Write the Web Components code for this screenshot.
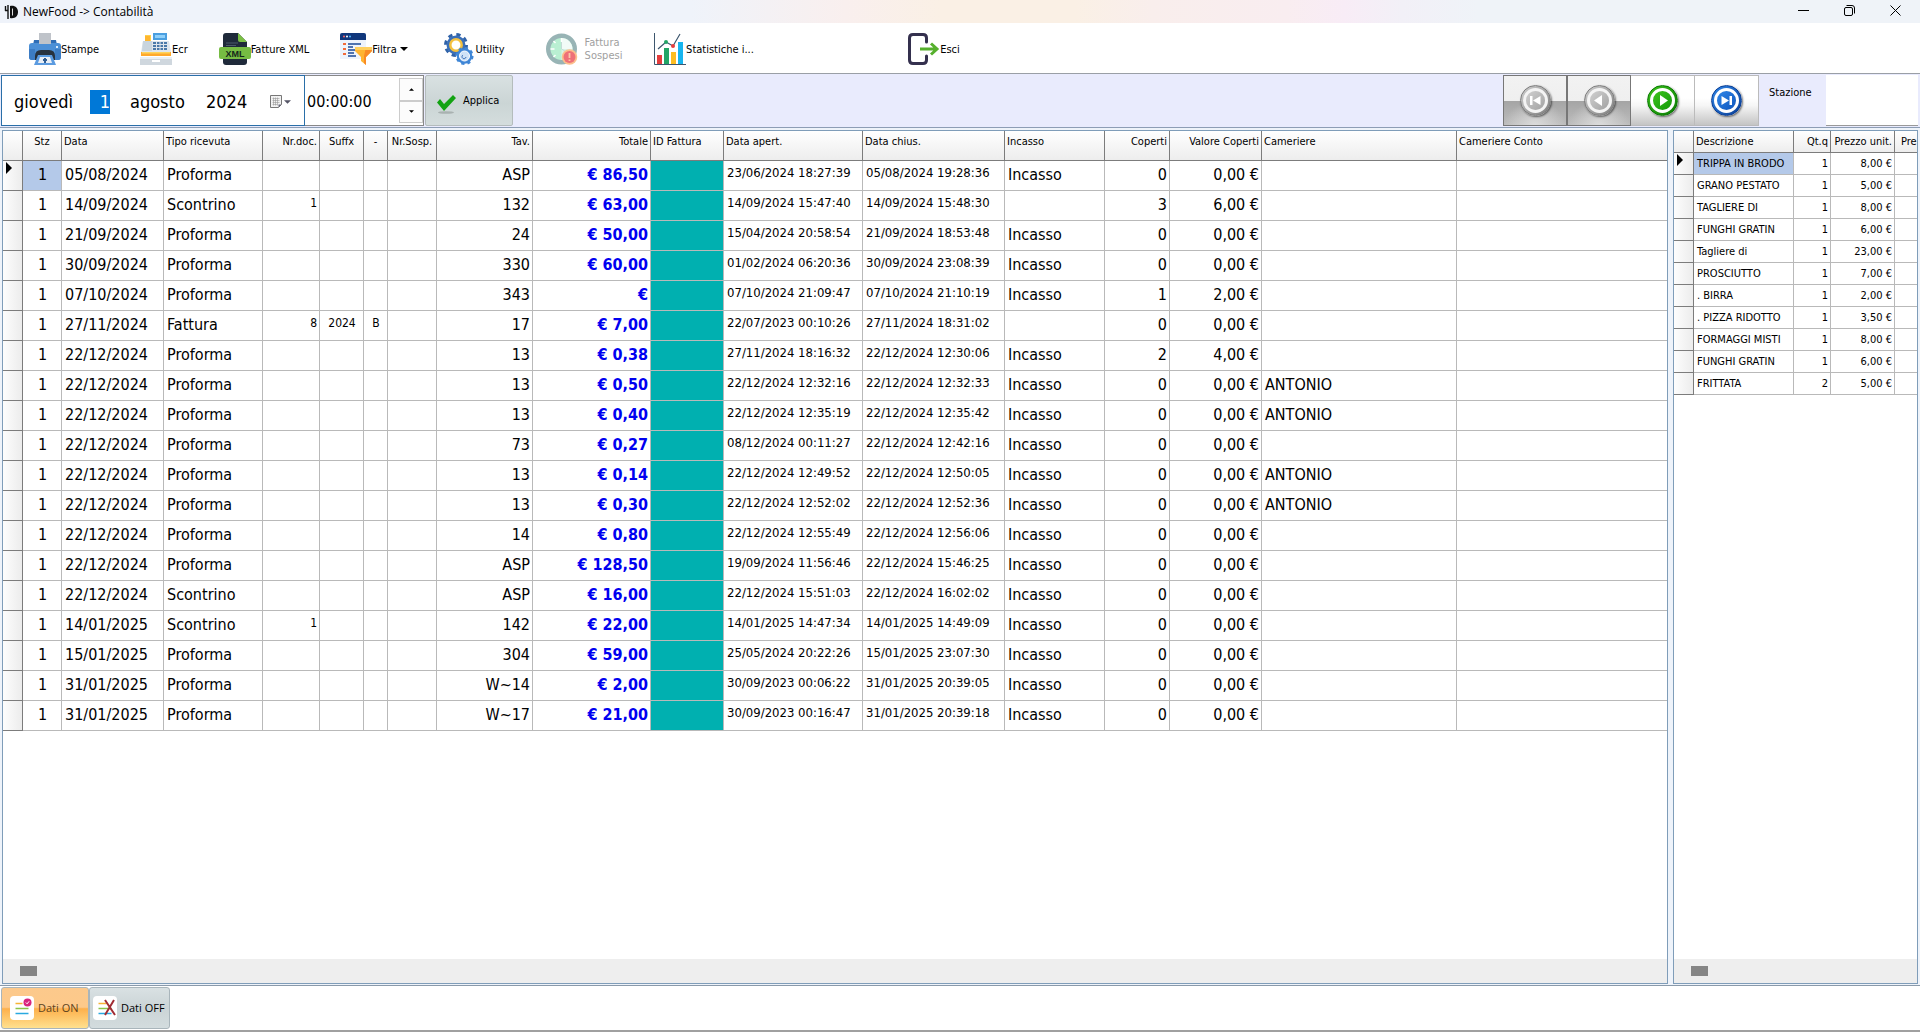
<!DOCTYPE html>
<html lang="it">
<head>
<meta charset="utf-8">
<title>NewFood -> Contabilità</title>
<style>
html, body { height: 100%; margin: 0; }
body { font: 11px/14px "DejaVu Sans Condensed", "Noto Sans", sans-serif; color: #000; background: #fff; overflow: hidden; }
</style>
</head>
<body>
<nf-app></nf-app>

<template id="t-icons">
  <svg data-name="logo" viewBox="0 0 14 14"><path d="M1.500 1v5M4 0v14M1 5.500h3" stroke="#111" stroke-width="1.400" fill="none"/><path d="M6 1c5-1 8 2 8 6s-3 7-8 6z" fill="#111"/><path d="M8.500 3.500v7" stroke="#ddd"/></svg>
  <svg data-name="print" viewBox="0 0 32 32"><path d="M5 7h22l1 5H4z" fill="#2f6db5"/><rect y="10" width="32" height="17" rx="3" fill="#4b8fd6"/><path d="M0 16h6v11H3q-3 0-3-3zM26 16h6v8q0 3-3 3h-3z" fill="#3c7cc4"/><path d="M10 0h12v11H10z" fill="#bfc3c9"/><path d="M6 27v-4q0-6 6-6h8q6 0 6 6v4z" fill="#27323f"/><path d="M9 22h14l4 10H5z" fill="#5b9be0"/><path d="M11 24h10l2 6H9z" fill="#e9eef5"/><path d="M16 25v5M14 27h4" stroke="#2f5d93" stroke-width="2"/><path d="M27 13h2v2h-2z" fill="#d9ecff"/></svg>
  <svg data-name="ecr" viewBox="0 0 32 32"><path d="M5 2h6v9H5z" fill="#ffd04a"/><path d="M13 0h14v7H13z" fill="#4a9fe0"/><path d="M15 2h10v3H15z" fill="#8fd0fa"/><path d="M3 8h26l2 11H1z" fill="#dfe6ec"/><path d="M3 8h9v10H2z" fill="#c9d5de"/><path d="M5 3h5v5H5z" fill="#ffb62e"/><path d="M13 9h14v8H13z" fill="#4b79a8"/><path d="M13 11.500h14M13 14.500h14M16.500 9v8M20 9v8M23.500 9v8" stroke="#dfe6ec"/><path d="M1 19h30v4H1z" fill="#ffa92c"/><path d="M2 19h28v1.500H2z" fill="#ffd45c"/><path d="M0 24h32v8H0z" fill="#cfd7de"/><path d="M0 24h32v2H0z" fill="#eaf0f4"/><path d="M12 28h8" stroke="#fff" stroke-width="2"/></svg>
  <svg data-name="xml" viewBox="0 0 32 32"><path d="M7 0h12l9 9v20q0 3-3 3H7q-3 0-3-3V3q0-3 3-3z" fill="#1f2a3a"/><path d="M19 0l9 9h-7q-2 0-2-2z" fill="#7ac043"/><path d="M7 10h12M7 12.500h10" stroke="#4d5a6b"/><rect y="14" width="32" height="12" rx="2" fill="#76bc43"/><text x="16" y="23.500" text-anchor="middle" font-family="Liberation Sans Narrow, Liberation Sans" font-weight="bold" font-size="9" fill="#14261a">XML</text></svg>
  <svg data-name="filter" viewBox="0 0 32 32"><path d="M2 0h22q2 0 2 2v24H0V2q0-2 2-2z" fill="#eef3fc"/><path d="M2 0h22q2 0 2 2v5H0V2q0-2 2-2z" fill="#10377c"/><circle cx="4" cy="3.500" r="1" fill="#f66"/><circle cx="7" cy="3.500" r="1" fill="#fff"/><circle cx="10" cy="3.500" r="1" fill="#5bf"/><path d="M3 11h3M3 16h3M3 21h3" stroke="#f26b3a" stroke-width="2"/><path d="M8 11h13M8 14h5M8 17h8M8 20h6M8 23h8" stroke="#1b4a96" stroke-width="1.400"/><path d="M15 14h17v4l-6 6v8l-5-4v-4l-6-6z" fill="#ffb431"/><path d="M26 14h6v4l-6 6v8l-2-2v-7z" fill="#f98a25"/><path d="M15 14h17v3H15z" fill="#ffcf5e"/></svg>
  <svg data-name="gears" viewBox="0 0 32 32"><circle cx="13" cy="12" r="10.500" fill="none" stroke="#2f62a8" stroke-width="3" stroke-dasharray="4.250 4"/><circle cx="13" cy="12" r="7.500" fill="#fff" stroke="#3a6fb8" stroke-width="4"/><circle cx="13" cy="12" r="5.700" fill="#fff" stroke="#f4c13f" stroke-width="2.500"/><circle cx="21.500" cy="23" r="7.800" fill="#3f86d6" stroke="#3f86d6" stroke-width="2.500" stroke-dasharray="3.100 3.030"/><circle cx="21.500" cy="23" r="5" fill="#cfe2f7" stroke="#fff"/><path d="M20 22a2 2 0 1 0 3 2" stroke="#3a6fb8" fill="none"/></svg>
  <svg data-name="clock" viewBox="0 0 32 32"><circle cx="15.500" cy="16" r="13.250" fill="#b9efd2" stroke="#98b4b5" stroke-width="4.500"/><path d="M15.500 16V5a11 11 0 0 1 11 11z" fill="#f2fbf7"/><path d="M15.500 16h11a11 11 0 0 1-11 11z" fill="#d8f3e6"/><path d="M15.500 5v4M4.500 16h4M7.500 8l2 2M7.500 24l2-2" stroke="#fff" stroke-width="1.500"/><path d="M15.500 9v7l5 3" fill="none" stroke="#c4dcd6"/><circle cx="23.500" cy="24" r="7.750" fill="#fbbf8c"/><circle cx="23.500" cy="24" r="6" fill="#ee7078"/><path d="M23.500 20v5M23.500 26.500v1.500" stroke="#fcc6a8" stroke-width="1.800"/></svg>
  <svg data-name="chart" viewBox="0 0 32 32"><path d="M.5 0v31.500H32" fill="none" stroke="#3d566e"/><path d="M3 22h5v9H3z" fill="#e43d3d"/><path d="M10 15h5v16h-5z" fill="#23a566"/><path d="M17 19h5v12h-5z" fill="#fdbd22"/><path d="M24 9h5v22h-5z" fill="#17b5ef"/><path d="M4 16l8-7 7 4 7-12" fill="none" stroke="#3d566e" stroke-width="1.200"/><circle cx="12" cy="9" r="2" fill="#23a566"/><circle cx="19" cy="13" r="2" fill="#e43d3d"/></svg>
  <svg data-name="exit" viewBox="0 0 32 32"><path d="M18.500 9V5q0-3.500-3.500-3.500H5Q1.500 1.500 1.500 5v22q0 3.500 3.500 3.500h10q3.500 0 3.500-3.500v-4" fill="none" stroke="#34304e" stroke-width="3" stroke-linecap="round"/><path d="M12 16h16M23 10.500l6 5.500-6 5.500" fill="none" stroke="#56b02d" stroke-width="3"/></svg>
  <svg data-name="check" viewBox="0 0 20 20"><ellipse cx="10" cy="18.500" rx="8" ry="1.300" fill="#a9b2b1"/><path d="M1 8.500L4 5l4 5 9-9 3 3L8 17z" fill="#12a312"/></svg>
  <svg data-name="cal" viewBox="0 0 12 13"><path d="M.5.5h11v9l-3 3h-8z" fill="#f2f2f2" stroke="#777"/><path d="M2.500 3.500h7M2.500 5.500h7M2.500 7.500h7M2.500 9.500h5M3.500 2.500v8M5.500 2.500v8M7.500 2.500v8" stroke="#999" stroke-width=".6"/><path d="M8.500 12.500v-3h3z" fill="#667"/></svg>
  <svg data-name="down" viewBox="0 0 8 4"><path d="M0 0h8L4 4z" fill="currentColor"/></svg>
  <svg data-name="up" viewBox="0 0 8 4"><path d="M0 4h8L4 0z" fill="currentColor"/></svg>
  <svg data-name="min" viewBox="0 0 11 11"><path d="M0 5.500h11" stroke="#000"/></svg>
  <svg data-name="restore" viewBox="0 0 11 11"><rect x=".5" y="2.500" width="8" height="8" rx="1.500" fill="none" stroke="#000"/><path d="M2.500.5H8Q10.500.5 10.500 3v5.500" fill="none" stroke="#000"/></svg>
  <svg data-name="close" viewBox="0 0 11 11"><path d="M.5.5l10 10M10.500.5l-10 10" stroke="#000"/></svg>
  <svg data-name="on" viewBox="0 0 24 24"><rect width="24" height="24" rx="4" fill="#fff"/><path d="M5.500 7.500h7" stroke="#f7b334" stroke-width="1.500"/><path d="M5.500 12.500h13" stroke="#8bc34a" stroke-width="1.500"/><path d="M5.500 17.500h13" stroke="#29a9e0" stroke-width="1.500"/><circle cx="17.500" cy="6.500" r="4" fill="#d9267e"/><path d="M15.800 6.500l1.300 1.300 2-2.500" fill="none" stroke="#fff"/></svg>
  <svg data-name="off" viewBox="0 0 24 24"><rect width="24" height="24" rx="4" fill="#fff"/><path d="M5.500 7.500h8" stroke="#f7b334" stroke-width="1.500"/><path d="M5.500 12.500h13" stroke="#8bc34a" stroke-width="1.500"/><path d="M5.500 17.500h13" stroke="#29a9e0" stroke-width="1.500"/><path d="M12 4l10 15M21 4L12 19" stroke="#a02c33" stroke-width="2"/></svg>
  <svg data-name="first" viewBox="0 0 19 19"><path d="M4 5h2.500v9H4zM14.500 5v9l-7.500-4.500z" fill="#fff"/></svg>
  <svg data-name="prev" viewBox="0 0 19 19"><path d="M12 4v11L4 9.500z" fill="#fff"/></svg>
  <svg data-name="next" viewBox="0 0 19 19"><path d="M7 4v11l8-5.500z" fill="#fff"/></svg>
  <svg data-name="last" viewBox="0 0 19 19"><path d="M4.500 5v9l7.500-4.500zM12.500 5H15v9h-2.500z" fill="#fff"/></svg>
</template>

<template id="t-app">
  <style>
    :host { display: flex; flex-direction: column; height: 100vh; box-sizing: border-box; border-bottom: 2px solid #a0a0a0; }
    main { flex: 1; display: flex; gap: 5px; padding: 2px 2px 1px; min-height: 0; background: #eef3fa; border-top: 1px solid #8d9db5; border-bottom: 1px solid #8a9aaa; }
    nf-grid { min-width: 0; }
    .docs { flex: 1; --head: 30px; --row: 30px; }
    .items { flex: 0 0 245px; --head: 22px; --row: 22px; --thumb: 17px; }
  </style>
  <nf-titlebar>NewFood -&gt; Contabilità</nf-titlebar>
  <nf-toolbar></nf-toolbar>
  <nf-filterbar></nf-filterbar>
  <main>
    <nf-grid class="docs" data-source="docs"></nf-grid>
    <nf-grid class="items" data-source="items"></nf-grid>
  </main>
  <nf-footer></nf-footer>
</template>

<template id="t-titlebar">
  <style>
    :host { display: flex; align-items: center; gap: 5px; height: 23px; padding-left: 4px; font: 12px/20px "Open Sans", "Noto Sans", sans-serif; background: linear-gradient(90deg, #eff3fa 0, #eff3fa 36%, #f9efee 44%, #faf0e5 49%, #faf0e5 56%, #f9eeec 60%, #f9edf0 67%, #f8ecf6 70%, #f2f0f7 73%, #eff3f8 77%); }
    .logo { width: 14px; height: 14px; }
    h1 { flex: 1; margin: 0; font: inherit; }
    button { display: grid; place-items: center; width: 46px; height: 20px; padding: 0; border: 0; background: none; }
    button nf-icon { width: 11px; height: 11px; }
    .win { display: flex; padding-right: 2px; padding-bottom: 2px; }
  </style>
  <nf-icon class="logo" name="logo"></nf-icon>
  <h1><slot></slot></h1>
  <div class="win">
    <button aria-label="Riduci"><nf-icon name="min"></nf-icon></button>
    <button aria-label="Ripristina"><nf-icon name="restore"></nf-icon></button>
    <button aria-label="Chiudi"><nf-icon name="close"></nf-icon></button>
  </div>
</template>

<template id="t-toolbar">
  <style>
    :host { display: flex; box-sizing: border-box; height: 51px; padding: 2px 0 0 14px; border-bottom: 1px solid #9a9fa6; background: #fff; }
    .exit { margin-left: 130px; }
    .w80 { flex-basis: 80px; }
    .w120 { flex-basis: 120px; }
    .w140 { flex-basis: 140px; }
    nf-tool[disabled] { color: #a0a0a0; --gap: 7px; }
  </style>
  <nf-tool icon="print">Stampe</nf-tool>
  <nf-tool icon="ecr">Ecr</nf-tool>
  <nf-tool icon="xml">Fatture XML</nf-tool>
  <nf-tool icon="filter" class="w120" menu>Filtra</nf-tool>
  <nf-tool icon="gears" class="w80">Utility</nf-tool>
  <nf-tool icon="clock" class="w140" disabled>Fattura<br>Sospesi</nf-tool>
  <nf-tool icon="chart">Statistiche i...</nf-tool>
  <nf-tool icon="exit" class="exit">Esci</nf-tool>
</template>

<template id="t-tool">
  <style>
    :host { display: flex; flex: 0 0 100px; }
    button { flex: 1; display: flex; align-items: center; justify-content: center; gap: var(--gap, 0); padding: 0; border: 0; background: none; font: inherit; line-height: 13px; text-align: left; color: inherit; white-space: nowrap; }
    nf-icon { flex: none; width: 32px; height: 32px; }
    .arrow { width: 8px; height: 4px; margin-left: 3px; }
  </style>
  <button><nf-icon></nf-icon><span><slot></slot></span></button>
</template>

<template id="t-filterbar">
  <style>
    :host { display: flex; height: 51px; padding: 1px 2px 1px 1px; background: #e9ebfd; }
    input { box-sizing: border-box; border: 0; padding: 0; margin: 0; background: #fff; font: 18px/24px "DejaVu Sans Condensed", "Noto Sans", sans-serif; color: #000; }
    .date { display: flex; align-items: center; width: 304px; box-sizing: border-box; padding: 2px 12px 0; border: 1px solid #2a6fa8; background: #fff; }
    .date input { height: 24px; }
    .wd { width: 76px; }
    .dd { width: 20px; color: #fff; background: #0078d7; text-align: right; }
    .mm { width: 76px; margin-left: 20px; }
    .yy { width: 64px; }
    .pick { display: flex; align-items: center; gap: 2px; padding: 0; border: 0; background: none; color: #556; }
    .cal { width: 12px; height: 13px; }
    .dn { width: 7px; height: 4px; }
    .time { display: flex; width: 119px; box-sizing: border-box; background: #fff; border: solid #888; border-width: 1px 1px 1px 0; }
    .time input { flex: 1; min-width: 0; font-size: 16px; padding: 2px 0 0 2px; }
    .spin { display: flex; flex-direction: column; width: 24px; padding: 2px 0; }
    .spin button { flex: 1; display: grid; place-items: center; padding: 0; border: 1px solid #ccc; background: #fcfcfc; }
    .spin nf-icon { width: 5px; height: 3px; }
    .apply { display: flex; align-items: center; width: 88px; margin-left: 1px; padding: 0 10px; gap: 7px; border: 1px solid #b4bcbc; border-radius: 2px; background: linear-gradient(#d9e1e2, #cbd5d5 55%, #d4dddd); font: inherit; }
    .apply nf-icon { width: 20px; height: 20px; margin-top: 6px; }
    .nav { display: flex; margin-left: auto; }
    .st { display: flex; flex: none; }
    .st label { width: 67px; box-sizing: border-box; padding: 11px 10px; }
    .st input { width: 92px; border-bottom: 1px solid #999; }
  </style>
  <div class="date" role="group" aria-label="Data">
    <input class="wd" aria-label="Giorno della settimana" value="giovedì">
    <input class="dd" aria-label="Giorno" value="1">
    <input class="mm" aria-label="Mese" value="agosto">
    <input class="yy" aria-label="Anno" value="2024">
    <button class="pick" aria-label="Apri calendario"><nf-icon class="cal" name="cal"></nf-icon><nf-icon class="dn" name="down"></nf-icon></button>
  </div>
  <div class="time">
    <input aria-label="Ora" value="00:00:00">
    <div class="spin"><button aria-label="Aumenta"><nf-icon name="up"></nf-icon></button><button aria-label="Diminuisci"><nf-icon name="down"></nf-icon></button></div>
  </div>
  <button class="apply"><nf-icon name="check"></nf-icon>Applica</button>
  <div class="nav">
    <nf-nav icon="first" label="Primo" tone="grey"></nf-nav>
    <nf-nav icon="prev" label="Precedente" tone="grey"></nf-nav>
    <nf-nav icon="next" label="Successivo" tone="green"></nf-nav>
    <nf-nav icon="last" label="Ultimo" tone="blue"></nf-nav>
  </div>
  <div class="st"><label for="st">Stazione</label><input id="st"></div>
</template>

<template id="t-nav">
  <style>
    :host { display: flex; width: 64px; }
    button { flex: 1; display: grid; place-items: center; padding: 0; border: 1px solid #bbb; border-width: 1px 1px 1px 0; background: linear-gradient(#fff 45%, #f6f6f6 60%, #c4c4c4); }
    .disc, .core { display: grid; place-items: center; box-sizing: border-box; border-radius: 50%; }
    .disc { width: 31px; height: 31px; border: 1px solid var(--edge); background: linear-gradient(135deg, var(--light), var(--edge)); box-shadow: 1px 1px 2px #0008; }
    .core { width: 25px; height: 25px; border: 3px solid var(--ring, #fff); background: linear-gradient(135deg, var(--light), var(--dark)); background-clip: padding-box; }
    nf-icon { width: 19px; height: 19px; }
    :host([tone="green"]) { --edge: #0b7a04; --light: #3cc41c; --dark: #14990a; }
    :host([tone="blue"]) { --edge: #0b3f96; --light: #2f86e8; --dark: #0f55bd; }
    :host([tone="grey"]) { --edge: #7e7e7e; --light: #d0d0d0; --dark: #a2a2a2; --ring: #f4f4f4; }
    :host([tone="grey"]) button { border-color: #777; border-left: 1px solid #777; background: radial-gradient(ellipse at 50% 100%, #dcdcdc, #dcdcdc00 70%) 0 100% / 100% 50% no-repeat, linear-gradient(#f2f2f2 0, #efefef 50%, #a4a4a4 50%, #bdbdbd); }
  </style>
  <button><span class="disc"><span class="core"><nf-icon></nf-icon></span></span></button>
</template>

<template id="t-grid">
  <style>
    :host { display: flex; flex-direction: column; box-sizing: border-box; border: 1px solid #7f9db9; background: #fff; overflow: hidden; }
    .view { flex: 1; min-height: 0; overflow: hidden; }
    table { width: 100%; table-layout: fixed; border-collapse: separate; border-spacing: 0; }
    th, td { box-sizing: border-box; padding: 0 2px; border-right: 1px solid #b9b9b9; border-bottom: 1px solid #b9b9b9; text-align: left; white-space: nowrap; overflow: hidden; font-weight: normal; }
    th { height: var(--head); padding-top: 4px; vertical-align: top; border-color: #7c7c7c; background: linear-gradient(#fff, #ededed); }
    td { height: var(--row); vertical-align: middle; padding-left: 3px; }
    td:first-child { border-color: #7c7c7c; background: linear-gradient(90deg, #fdfdfd, #ececec); padding: 0; vertical-align: top; }
    tr > :last-child { border-right: 0; }
    th.end { padding-left: 6px; padding-right: 0; }
    td.big { font-size: 16px; line-height: 20px; padding-bottom: 2px; }
    .date { font-size: 13px; line-height: 16px; vertical-align: top; padding-top: 4px; }
    .sm { font-size: 12px; line-height: 16px; vertical-align: top; padding-top: 4px; }
    td.r, th.r { text-align: right; }
    td.c, th.c { text-align: center; }
    .eur { font-weight: bold; color: #0000f0; }
    td.teal { background: #00b0b0; }
    td.sel { background: #b4c9e9; }
    .mark { display: block; margin: 1px 0 0 3px; width: 0; height: 0; border: solid transparent; border-width: 6px 0 6px 6px; border-left-color: #000; }
    .scroll { height: 24px; padding-left: var(--thumb, 17px); display: flex; align-items: center; background: #eee; }
    .scroll i { width: 17px; height: 10px; background: #858585; }
  </style>
  <div class="view"><table><colgroup></colgroup><thead></thead><tbody></tbody></table></div>
  <div class="scroll"><i></i></div>
</template>

<template id="t-footer">
  <style>
    :host { display: flex; height: 44px; padding: 1px; box-sizing: border-box; }
    button { display: flex; align-items: center; gap: 4px; box-sizing: border-box; width: 81px; padding: 0 3px; border: 1px solid #a9b5bb; border-radius: 3px; background: linear-gradient(#d9e1e3, #cbd4d6 50%, #d3dcde); font: 11px/16px "Open Sans", "Noto Sans", sans-serif; color: #000; white-space: nowrap; }
    .on { width: 88px; padding: 0 8px; color: #5d4320; background: linear-gradient(#fcc98c, #fdc98a 48%, #fdb04c 52%, #ffe08f); }
    nf-icon { flex: none; width: 24px; height: 24px; }
  </style>
  <button class="on" aria-pressed="true"><nf-icon name="on"></nf-icon>Dati ON</button>
  <button aria-pressed="false"><nf-icon name="off"></nf-icon>Dati OFF</button>
</template>

<script>
const tpl = id => document.getElementById('t-' + id).content;

class Base extends HTMLElement {
  constructor() {
    super();
    this.attachShadow({ mode: 'open' }).append(tpl(this.constructor.tpl).cloneNode(true));
  }
}
const simple = (tag, id) => customElements.define(tag, class extends Base { static tpl = id; });

class NfIcon extends HTMLElement {
  constructor() {
    super();
    this.attachShadow({ mode: 'open' }).innerHTML =
      '<style>:host{display:block}svg{display:block;width:100%;height:100%;overflow:visible}</style>';
  }
  static observedAttributes = ['name'];
  attributeChangedCallback(_, __, name) {
    const src = tpl('icons').querySelector('[data-name="' + name + '"]');
    this.shadowRoot.querySelector('svg')?.remove();
    if (src) {
      const svg = src.cloneNode(true);
      svg.setAttribute('aria-hidden', 'true');
      this.shadowRoot.append(svg);
    }
  }
}
customElements.define('nf-icon', NfIcon);

customElements.define('nf-tool', class extends Base {
  static tpl = 'tool';
  connectedCallback() {
    this.shadowRoot.querySelector('nf-icon').setAttribute('name', this.getAttribute('icon'));
    const b = this.shadowRoot.querySelector('button');
    b.disabled = this.hasAttribute('disabled');
    if (this.hasAttribute('menu')) {
      const a = document.createElement('nf-icon');
      a.className = 'arrow';
      a.setAttribute('name', 'down');
      b.append(a);
    }
  }
});

customElements.define('nf-nav', class extends Base {
  static tpl = 'nav';
  connectedCallback() {
    this.shadowRoot.querySelector('nf-icon').setAttribute('name', this.getAttribute('icon'));
    const b = this.shadowRoot.querySelector('button');
    b.setAttribute('aria-label', this.getAttribute('label'));
    b.disabled = this.getAttribute('tone') === 'grey';
  }
});

const docRows = `05/08/2024|Proforma||||ASP|€ 86,50|23/06/2024 18:27:39|05/08/2024 19:28:36|Incasso|0|0,00 €|
14/09/2024|Scontrino|1|||132|€ 63,00|14/09/2024 15:47:40|14/09/2024 15:48:30||3|6,00 €|
21/09/2024|Proforma||||24|€ 50,00|15/04/2024 20:58:54|21/09/2024 18:53:48|Incasso|0|0,00 €|
30/09/2024|Proforma||||330|€ 60,00|01/02/2024 06:20:36|30/09/2024 23:08:39|Incasso|0|0,00 €|
07/10/2024|Proforma||||343|€|07/10/2024 21:09:47|07/10/2024 21:10:19|Incasso|1|2,00 €|
27/11/2024|Fattura|8|2024|B|17|€ 7,00|22/07/2023 00:10:26|27/11/2024 18:31:02||0|0,00 €|
22/12/2024|Proforma||||13|€ 0,38|27/11/2024 18:16:32|22/12/2024 12:30:06|Incasso|2|4,00 €|
22/12/2024|Proforma||||13|€ 0,50|22/12/2024 12:32:16|22/12/2024 12:32:33|Incasso|0|0,00 €|ANTONIO
22/12/2024|Proforma||||13|€ 0,40|22/12/2024 12:35:19|22/12/2024 12:35:42|Incasso|0|0,00 €|ANTONIO
22/12/2024|Proforma||||73|€ 0,27|08/12/2024 00:11:27|22/12/2024 12:42:16|Incasso|0|0,00 €|
22/12/2024|Proforma||||13|€ 0,14|22/12/2024 12:49:52|22/12/2024 12:50:05|Incasso|0|0,00 €|ANTONIO
22/12/2024|Proforma||||13|€ 0,30|22/12/2024 12:52:02|22/12/2024 12:52:36|Incasso|0|0,00 €|ANTONIO
22/12/2024|Proforma||||14|€ 0,80|22/12/2024 12:55:49|22/12/2024 12:56:06|Incasso|0|0,00 €|
22/12/2024|Proforma||||ASP|€ 128,50|19/09/2024 11:56:46|22/12/2024 15:46:25|Incasso|0|0,00 €|
22/12/2024|Scontrino||||ASP|€ 16,00|22/12/2024 15:51:03|22/12/2024 16:02:02|Incasso|0|0,00 €|
14/01/2025|Scontrino|1|||142|€ 22,00|14/01/2025 14:47:34|14/01/2025 14:49:09|Incasso|0|0,00 €|
15/01/2025|Proforma||||304|€ 59,00|25/05/2024 20:22:26|15/01/2025 23:07:30|Incasso|0|0,00 €|
31/01/2025|Proforma||||W~14|€ 2,00|30/09/2023 00:06:22|31/01/2025 20:39:05|Incasso|0|0,00 €|
31/01/2025|Proforma||||W~17|€ 21,00|30/09/2023 00:16:47|31/01/2025 20:39:18|Incasso|0|0,00 €|`
  .split('\n').map(l => {
    const f = l.split('|');
    return ['1', ...f.slice(0, 5), '', f[5], f[6], '', ...f.slice(7), ''];
  });

const itemRows = `TRIPPA IN BRODO|1|8,00 €
GRANO PESTATO|1|5,00 €
TAGLIERE DI|1|8,00 €
FUNGHI GRATIN|1|6,00 €
Tagliere di|1|23,00 €
PROSCIUTTO|1|7,00 €
. BIRRA|1|2,00 €
. PIZZA RIDOTTO|1|3,50 €
FORMAGGI MISTI|1|8,00 €
FUNGHI GRATIN|1|6,00 €
FRITTATA|2|5,00 €`.split('\n').map(l => [...l.split('|'), '']);

/* Each column: title, width in px (0 = takes the rest), header class, cell class */
const sources = {
  docs: {
    cols: [['Stz', 39, 'c', 'big c'], ['Data', 102, '', 'big'], ['Tipo ricevuta', 99, '', 'big'],
      ['Nr.doc.', 57, 'r', 'sm r'], ['Suffx', 44, 'c', 'sm c'], ['-', 24, 'c', 'sm c'], ['Nr.Sosp.', 49, 'c', 'sm r'],
      ['Tav.', 96, 'r', 'big r'], ['Totale', 118, 'r', 'big r eur'], ['ID Fattura', 73, '', 'teal'],
      ['Data apert.', 139, '', 'date'], ['Data chius.', 142, '', 'date'], ['Incasso', 100, '', 'big'],
      ['Coperti', 65, 'r', 'big r'], ['Valore Coperti', 92, 'r', 'big r'], ['Cameriere', 195, '', 'big'], ['Cameriere Conto', 0, '', 'big']],
    rows: docRows
  },
  items: {
    cols: [['Descrizione', 100, '', ''], ['Qt.q', 37, 'r', 'r'], ['Prezzo unit.', 64, 'r', 'r'], ['Pre', 0, 'end', '']],
    rows: itemRows
  }
};

customElements.define('nf-grid', class extends Base {
  static tpl = 'grid';
  connectedCallback() {
    const { cols, rows } = sources[this.dataset.source];
    const $ = s => this.shadowRoot.querySelector(s);
    $('colgroup').innerHTML = '<col style="width:20px">' +
      cols.map(c => c[1] ? `<col style="width:${c[1]}px">` : '<col>').join('');
    $('thead').innerHTML = '<tr><th></th>' + cols.map(c => `<th class="${c[2]}">${c[0]}</th>`).join('') + '</tr>';
    $('tbody').innerHTML = rows.map((r, i) => '<tr><td>' + (i ? '' : '<span class="mark"></span>') + '</td>' +
      r.map((v, j) => `<td class="${cols[j][3]}${!i && !j ? ' sel' : ''}">${v}</td>`).join('') + '</tr>').join('');
  }
});

simple('nf-titlebar', 'titlebar');
simple('nf-toolbar', 'toolbar');
simple('nf-filterbar', 'filterbar');
simple('nf-footer', 'footer');
simple('nf-app', 'app');
</script>
</body>
</html>
